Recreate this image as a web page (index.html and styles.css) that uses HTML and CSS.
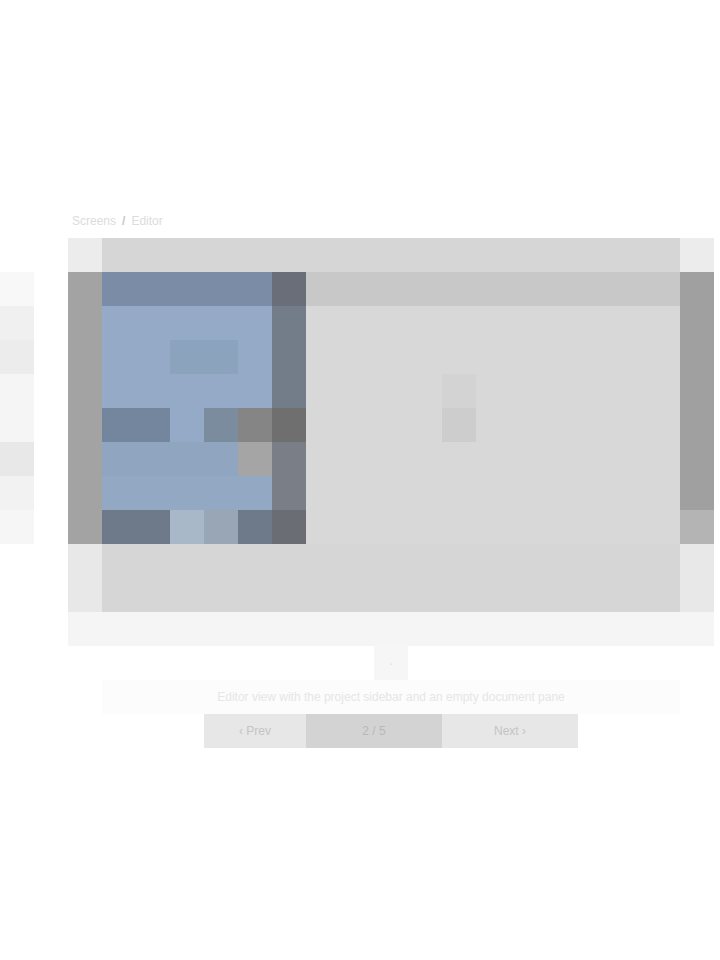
FILE: index.html
```html
<!DOCTYPE html>
<html lang="en">
<head>
<meta charset="utf-8">
<title>Preview carousel</title>
<link rel="stylesheet" href="styles.css">
</head>
<body>
<main class="page">
  <div class="carousel">
    <aside class="peek" aria-hidden="true">
      <span class="p1"></span><span class="p2"></span><span class="p3"></span><span class="p4"></span>
      <span class="p5"></span><span class="p6"></span><span class="p7"></span><span class="p8"></span>
    </aside>
    <section class="slide">
      <div class="slide-title"><span class="t1">Screens</span><span class="t2">/</span><span class="t3">Editor</span></div>
      <figure class="shot">
        <div class="shot-top">
          <span class="edge-light"></span>
          <span class="top-mid"></span>
          <span class="edge-light"></span>
        </div>
        <div class="shot-body">
          <span class="edge-dark"></span>
          <div class="sidebar">
            <div class="side-head"></div>
            <div class="side-main">
              <div class="side-row r1"></div>
              <div class="side-row r2"><span class="icon"></span></div>
              <div class="side-row r3"></div>
              <div class="side-row r4">
                <span class="lbl"></span><span class="gap"></span><span class="chip"></span><span class="chip grey"></span>
              </div>
              <div class="side-row r5"><span class="sp"></span><span class="chip grey2"></span></div>
              <div class="side-row r6"></div>
              <div class="side-row r7">
                <span class="lbl dark"></span><span class="chip pale"></span><span class="chip pale2"></span><span class="lbl dark short"></span>
              </div>
            </div>
          </div>
          <div class="splitter">
            <span class="s-top"></span><span class="s-mid"></span><span class="s-knob"></span><span class="s-mid2"></span><span class="s-bot"></span>
          </div>
          <div class="pane">
            <div class="pane-head"></div>
            <div class="pane-body">
              <span class="cursor"></span>
              <span class="mark"></span>
            </div>
          </div>
          <div class="scroll">
            <span class="track"></span><span class="track-end"></span>
          </div>
        </div>
        <div class="shot-foot">
          <span class="edge-foot"></span>
          <span class="foot-mid"></span>
          <span class="edge-foot"></span>
        </div>
      </figure>
      <div class="cap-bar"></div>
      <div class="caption">
        <div class="cap-dot">·</div>
        <p class="cap-text">Editor view with the project sidebar and an empty document pane</p>
      </div>
      <nav class="pager">
        <button class="pg-btn prev">‹ Prev</button>
        <button class="pg-btn current">2 / 5</button>
        <button class="pg-btn next">Next ›</button>
      </nav>
    </section>
  </div>
</main>
</body>
</html>
```

FILE: styles.css
```css
* { box-sizing: border-box; }
html, body { margin: 0; padding: 0; background: #ffffff; }
body { font-family: "Liberation Sans", Arial, sans-serif; color: #999; }

.page { padding-top: 204px; width: 720px; }

.carousel {
  display: grid;
  grid-template-columns: 34px 646px;
  column-gap: 34px;
  align-items: start;
}

/* peeking previous slide */
.peek { margin-top: 68px; display: flex; flex-direction: column; }
.peek span { display: block; height: 34px; }
.p1 { background: #f8f8f8; }
.p2 { background: #f0f0f0; }
.p3 { background: #ececec; }
.p4 { background: #f5f5f5; }
.p5 { background: #f5f5f5; }
.p6 { background: #e8e8e8; }
.p7 { background: #f2f2f2; }
.p8 { background: #f6f6f6; }

.slide { display: flex; flex-direction: column; }

.slide-title {
  height: 34px;
  display: flex;
  align-items: center;
  font-size: 12px;
  color: #dcdcdc;
  gap: 6px;
  padding-left: 4px;
}
.slide-title .t2 { color: #c8c8c8; font-weight: bold; }

/* screenshot frame */
.shot { margin: 0; width: 646px; display: flex; flex-direction: column; background: #d6d6d6; }

.shot-top, .shot-foot, .shot-body { display: flex; }
.shot-top { height: 34px; }
.edge-light { width: 34px; background: #ececec; }
.top-mid { flex: 1; background: #d6d6d6; }

.shot-body { height: 272px; }
.edge-dark { width: 34px; background: #a3a3a3; }

.sidebar { width: 170px; display: flex; flex-direction: column; background: #94aac6; }
.side-head { height: 34px; background: #7a8ca6; }
.side-main { flex: 1; display: flex; flex-direction: column; }
.side-row { height: 34px; display: flex; }
.side-row.r2 .icon { margin-left: 68px; width: 68px; background: #8ca3bd; }
.side-row .lbl { width: 68px; background: #74859e; }
.side-row .lbl.dark { background: #6e7a8a; }
.side-row .lbl.short { width: 34px; }
.side-row .gap { width: 34px; }
.side-row .chip { width: 34px; background: #7a8c9e; }
.side-row .chip.grey { background: #858585; }
.side-row .sp { width: 136px; }
.side-row .chip.grey2 { background: #a5a5a5; }
.side-row .chip.pale { background: #a8b8c8; }
.side-row .chip.pale2 { background: #98a6b6; }
.side-row.r5 { background: #90a6c0; }
.side-row.r6 { background: #93a8c2; }

.splitter { width: 34px; display: flex; flex-direction: column; }
.splitter span { display: block; }
.s-top { height: 34px; background: #6a6e78; }
.s-mid { height: 102px; background: #737d89; }
.s-knob { height: 34px; background: #6f6f6f; }
.s-mid2 { height: 68px; background: #7a7e86; }
.s-bot { height: 34px; background: #6a6e74; }

.pane { flex: 1; display: flex; flex-direction: column; background: #d8d8d8; }
.pane-head { height: 34px; background: #c8c8c8; }
.pane-body { flex: 1; display: grid; grid-template-columns: 136px 34px 1fr; grid-template-rows: 68px 34px 34px 1fr; }
.pane-body .cursor { grid-column: 2; grid-row: 2; background: #d3d3d3; }
.pane-body .mark { grid-column: 2; grid-row: 3; background: #cdcdcd; }

.scroll { width: 34px; display: flex; flex-direction: column; }
.track { flex: 1; background: #a0a0a0; }
.track-end { height: 34px; background: #b4b4b4; }

.shot-foot { height: 68px; }
.edge-foot { width: 34px; background: #e8e8e8; }
.foot-mid { flex: 1; background: #d6d6d6; }

/* caption */
.cap-bar { height: 34px; background: #f5f5f5; }
.caption { height: 68px; display: flex; flex-direction: column; align-items: center; }
.cap-dot {
  height: 34px; width: 34px;
  display: flex; align-items: center; justify-content: center;
  background: #f6f6f6; color: #e0e0e0; font-size: 14px;
}
.cap-text {
  margin: 0; height: 34px; width: 578px;
  display: flex; align-items: center; justify-content: center;
  font-size: 12px; color: #e6e6e6; background: #fcfcfc;
}

/* pager */
.pager { display: flex; justify-content: center; height: 34px; }
.pg-btn {
  font-family: "Liberation Sans", Arial, sans-serif;
  font-size: 12px; border: 0; margin: 0; padding: 0;
  height: 34px; background: #e7e7e7; color: #c4c4c4;
}
.pg-btn.prev { width: 102px; }
.pg-btn.current { width: 136px; background: #d3d3d3; color: #b8b8b8; }
.pg-btn.next { width: 136px; }
```
